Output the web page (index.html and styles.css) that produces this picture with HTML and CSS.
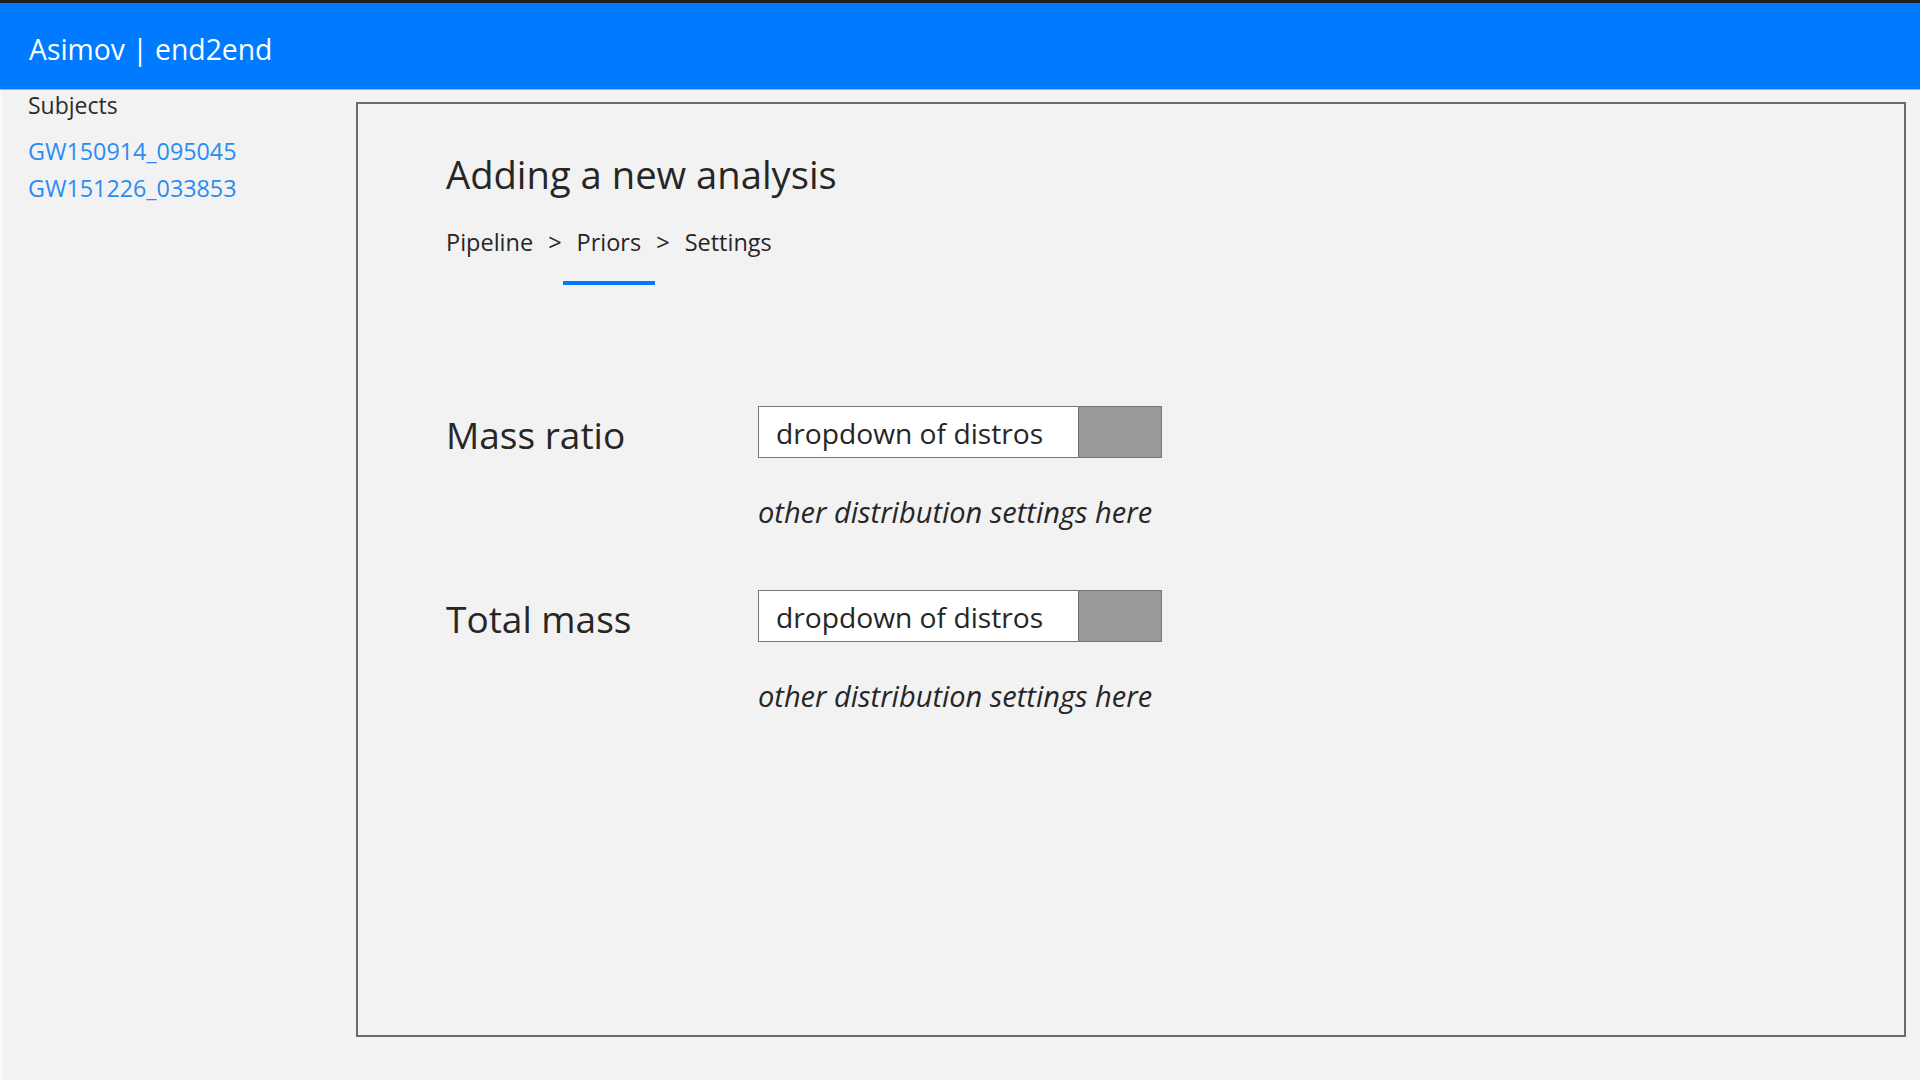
FILE: index.html
```html
<!DOCTYPE html>
<html lang="en">
<head>
<meta charset="utf-8">
<title>Asimov | end2end</title>
<link rel="stylesheet" href="styles.css">
</head>
<body>
<header class="topbar">
  <span class="brand">Asimov | end2end</span>
</header>
<div class="layout">
  <aside class="sidebar">
    <div class="side-title">Subjects</div>
    <ul class="subject-list">
      <li><a class="subject-link" href="#">GW150914_095045</a></li>
      <li><a class="subject-link" href="#">GW151226_033853</a></li>
    </ul>
  </aside>
  <main class="panel">
    <h1 class="panel-title">Adding a new analysis</h1>
    <nav class="steps">
      <span class="step">Pipeline</span>
      <span class="sep">&gt;</span>
      <span class="step active">Priors</span>
      <span class="sep">&gt;</span>
      <span class="step">Settings</span>
    </nav>
    <section class="priors">
      <div class="prior-row">
        <div class="prior-label">Mass ratio</div>
        <div class="prior-controls">
          <div class="select">
            <span class="select-text">dropdown of distros</span>
            <span class="select-btn"></span>
          </div>
          <div class="prior-note">other distribution settings here</div>
        </div>
      </div>
      <div class="prior-row">
        <div class="prior-label">Total mass</div>
        <div class="prior-controls">
          <div class="select">
            <span class="select-text">dropdown of distros</span>
            <span class="select-btn"></span>
          </div>
          <div class="prior-note">other distribution settings here</div>
        </div>
      </div>
    </section>
  </main>
</div>
</body>
</html>
```
FILE: styles.css
```css
html, body {
  margin: 0;
  padding: 0;
}

body {
  width: 1920px;
  height: 1080px;
  overflow: hidden;
  background: #f2f2f2;
  color: #232323;
  font-family: "Open Sans", "Noto Sans", sans-serif;
  display: flex;
  flex-direction: column;
}

.topbar {
  flex: none;
  height: 86px;
  border-top: 3px solid #1e1e1e;
  border-bottom: 1px solid #7fbcff;
  background: #007bff;
  padding-left: 29px;
  display: flex;
  align-items: center;
}

.brand {
  color: #ffffff;
  font-size: 28.3px;
  line-height: 38px;
  padding-top: 6px;
}

.layout {
  flex: 1;
  display: flex;
  min-height: 0;
  border-left: 3px solid #f8f8f8;
}

.sidebar {
  flex: none;
  width: 353px;
  padding-left: 25px;
  box-sizing: border-box;
}

.side-title {
  font-size: 23px;
  line-height: 30px;
  color: #2b2b2b;
}

.subject-list {
  list-style: none;
  margin: 13px 0 0;
  padding: 0;
}

.subject-link {
  font-size: 23.3px;
  line-height: 37px;
  color: #2a8cf2;
  text-decoration: none;
}

.panel {
  flex: 1;
  margin: 12px 14px 43px 0;
  border: 2px solid #6b6b6b;
  padding: 44px 0 0 88px;
  box-sizing: border-box;
}

.panel-title {
  margin: 0;
  font-size: 38.2px;
  line-height: 52px;
  font-weight: 400;
  color: #262626;
}

.steps {
  margin-top: 26px;
  display: flex;
  gap: 15px;
  font-size: 23.5px;
  line-height: 32px;
  color: #262626;
}

.step {
  position: relative;
}

.step.active::after {
  content: "";
  position: absolute;
  left: -14px;
  right: -14px;
  top: 55px;
  height: 4px;
  background: #007bff;
}

.priors {
  margin-top: 148px;
  display: flex;
  flex-direction: column;
  gap: 60px;
}

.prior-row {
  display: flex;
  align-items: flex-start;
}

.prior-label {
  flex: none;
  width: 312px;
  padding-top: 3px;
  font-size: 37px;
  line-height: 52px;
  color: #262626;
}

.prior-controls {
  display: flex;
  flex-direction: column;
}

.select {
  width: 404px;
  height: 52px;
  box-sizing: border-box;
  border: 1px solid #767676;
  background: #ffffff;
  display: flex;
}

.select-text {
  flex: 1;
  padding: 2px 0 0 17px;
  font-size: 28.2px;
  line-height: 48px;
  color: #262626;
}

.select-btn {
  flex: none;
  width: 83px;
  box-sizing: border-box;
  border-left: 1px solid #6e6e6e;
  background: #9a9a9a;
}

.prior-note {
  margin-top: 36px;
  font-size: 29px;
  line-height: 36px;
  font-style: italic;
  color: #262626;
}
```
